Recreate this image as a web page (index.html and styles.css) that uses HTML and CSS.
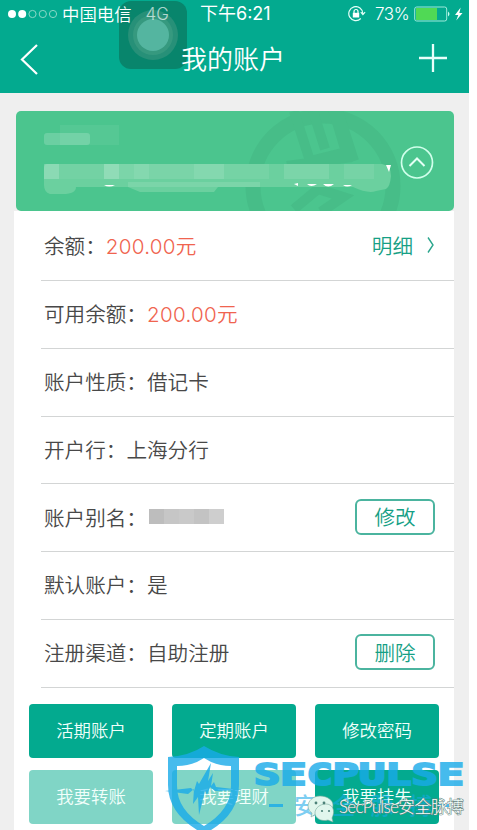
FILE: index.html
```html
<!DOCTYPE html>
<html lang="zh-CN">
<head>
<meta charset="utf-8">
<title>我的账户</title>
<link rel="stylesheet" href="styles.css">
</head>
<body>
<main class="screen">
  <header class="header">
    <div class="assist"><i></i></div>
    <div class="status">
      <div class="carrier">
        <svg width="50" height="12" viewBox="0 0 50 12"><g fill="#fff"><circle cx="4" cy="6" r="4"/><circle cx="14.2" cy="6" r="4"/></g><g fill="none" stroke="#8bd8c7"><circle cx="24.5" cy="6" r="3.6"/><circle cx="34.8" cy="6" r="3.6"/><circle cx="45" cy="6" r="3.6"/></g></svg>
        <span class="operator">中国电信</span><span class="network">4G</span>
      </div>
      <time class="time">下午6:21</time>
      <div class="power">
        <svg class="lock" width="18" height="16" viewBox="0 0 18 16"><path d="M12.8 12.5A7 7 0 1 1 14.8 7.5M12.8 6.2l2.1 2.4 2.2-2.4" fill="none" stroke="#e4fff8" stroke-width="1.2"/><path d="M4.8 6.8h6.4v4.7H4.8z" fill="#fff"/><path d="M6 7V5.5a2 2 0 0 1 4 0V7" fill="none" stroke="#fff" stroke-width="1.2"/></svg>
        <span class="percent">73%</span>
        <svg class="battery" width="50" height="16" viewBox="0 0 50 16"><rect x=".7" y="1" width="32" height="14" rx="2" fill="none" stroke="#a0eadb"/><path d="M2 2h21v12H2z" fill="#50d955"/><path d="M34 5.5q3 2.5 0 5z" fill="#c6fff1"/><path d="M46.7 1.5L41 9h3.3l-2.1 5.6L48.5 7h-3.2z" fill="#fff"/></svg>
      </div>
    </div>
    <div class="titlebar">
      <svg width="20" height="34" viewBox="0 0 20 34"><path d="M18 4L3 18.5 18 33" fill="none" stroke="#fff" stroke-width="2.2"/></svg>
      <h1>我的账户</h1>
      <svg width="30" height="30" viewBox="0 0 30 30"><path d="M1 15h28M15 1v28" stroke="#e9fffa" stroke-width="2.3"/></svg>
    </div>
  </header>

  <section class="card">
    <svg class="card-art" width="438" height="100" viewBox="0 0 438 100">
      <g fill="none" stroke="#47bd88"><circle cx="307" cy="75" r="70" stroke-width="15"/><path d="M278 0l16 50 36-9-13-43M297 0l12 38M271 55l65-9M278 98l24-20 25 8-22 15M322 0l16 50" stroke-width="10"/></g>
      <g fill="#fff"><path opacity=".06" d="M44 14h59v20H44z"/><rect opacity=".18" x="28" y="22" width="46" height="12" rx="3"/></g>
      <path d="M31 53h335q9 1 9 12-1 11-5 13l-10 2q-8 3-23-4H202l-4 5H124l-12-5H60q0 7-13 7H34q-6-2-6-9V57q0-4 3-4z" fill="#6bd09f"/>
      <g fill="#fff"><rect opacity=".22" x="28" y="53" width="15" height="15"/><rect opacity=".06" x="43" y="53" width="45" height="15"/><rect opacity=".25" x="88" y="53" width="15" height="15"/><rect opacity=".11" x="103" y="53" width="15" height="15"/><rect opacity=".17" x="118" y="53" width="15" height="15"/><rect opacity=".1" x="133" y="53" width="45" height="15"/><rect opacity=".17" x="178" y="53" width="30" height="15"/><rect opacity=".07" x="208" y="53" width="45" height="15"/><rect opacity=".11" x="268" y="53" width="45" height="15"/><rect opacity=".08" x="328" y="53" width="30" height="15"/><rect opacity=".11" x="112" y="71" width="132" height="5"/></g>
      <path d="M88 74q5 3 11 0zM278 73l4-1v3zM291 73q4 4 10 0zM307 73q5 5 11 0zM327 74q4 3 9 0zM370 54h5l-2 7z" fill="#fff"/>
      <circle cx="401" cy="51.5" r="15.5" fill="none" stroke="#d0ffeb" stroke-width="1.7"/><path d="M393.5 55l7.5-7.5 7.5 7.5" fill="none" stroke="#e5fff5" stroke-width="2"/>
    </svg>
  </section>

  <section class="panel">
    <div class="rows">
      <div class="row"><span>余额：</span><b>200.00元</b><a class="detail">明细<svg width="9" height="18" viewBox="0 0 9 18"><path d="M2 1.5l5 7.5-5 7.5" fill="none" stroke="#2ba68d" stroke-width="1.4"/></svg></a></div>
      <div class="row"><span>可用余额：</span><b>200.00元</b></div>
      <div class="row"><span>账户性质：</span><span>借记卡</span></div>
      <div class="row"><span>开户行：</span><span>上海分行</span></div>
      <div class="row"><span>账户别名：</span><i class="mask"></i><button class="outline">修改</button></div>
      <div class="row"><span>默认账户：</span><span>是</span></div>
      <div class="row"><span>注册渠道：</span><span>自助注册</span><button class="outline">删除</button></div>
    </div>
    <div class="actions">
      <button>活期账户</button><button>定期账户</button><button>修改密码</button>
      <button class="pale">我要转账</button><button class="pale">我要理财</button><button>我要挂失</button>
    </div>
  </section>

  <svg class="watermark" width="317" height="90" viewBox="160 740 317 90">
    <path d="M177 766q15 0 27-8 12 8 27 8v4h-54z" fill="#fff"/>
    <g fill="#19abe9" opacity=".8">
      <path fill-rule="evenodd" d="M168 757q21-1 36-11 16 10 35 11v28q0 31-35 49-36-19-36-49zM177 766v20q0 24 27 40 27-16 27-40v-20q-15 0-27-8-12 8-27 8z"/>
      <path d="M165 791l26-3 3 3 3-10 2 3 12-21-3 18 5-8-2 13 3-4 2 5 26 3-27 1-5-4-3 8-2-4-6 24-1-18-5 7 1-15-6 5z"/>
      <text class="brand" x="254" y="785" textLength="210" lengthAdjust="spacingAndGlyphs">SECPULSE</text>
      <path d="M269 804h14v3h-14zM438 804h11v3h-11z"/>
      <text class="brand-cn" x="294" y="814" textLength="138">安全脉搏</text>
    </g>
    <g fill="#e0f6ed" stroke="#78aa9c" stroke-width=".6"><path d="M320 796c-7 0-12 5-12 10 0 3 2 6 4 7l-1 4 5-3c12 2 17-3 17-9 0-5-6-9-13-9z"/><path d="M326 804c-6 0-11 4-11 9s6 9 13 7l5 2-1-4c4-8 0-14-6-14z"/></g>
    <g fill="#4d8279"><circle cx="316" cy="803" r="1.4"/><circle cx="324" cy="803" r="1.4"/><circle cx="322" cy="811" r="1.1"/><circle cx="329" cy="811" r="1.1"/></g>
    <text class="credit" x="339" y="813" textLength="125">SecPulse安全脉搏</text>
  </svg>
</main>
</body>
</html>
```

FILE: styles.css
```css
* { box-sizing: border-box; }
body { margin: 0; background: #fff; font-family: "Noto Sans CJK SC", sans-serif; font-weight: 350; }
.screen { position: relative; width: 469px; height: 830px; background: #efefef; display: flex; flex-direction: column; }
.header { position: relative; height: 93px; flex: none; background: #03aa8f; color: #fff; }
.status { position: relative; height: 28px; padding: 0 5px 0 8px; display: grid; grid-template-columns: 192px 1fr auto; align-items: center; font-size: 17.4px; line-height: 28px; }
.carrier, .power { display: flex; align-items: center; }
.operator { margin-left: 4px; }
.network { margin-left: 14px; font-family: Inter, sans-serif; font-size: 17px; opacity: .65; }
.time { font-weight: 400; font-family: Inter, "Noto Sans CJK SC", sans-serif; font-size: 18px; white-space: nowrap; }
.percent { font-family: Inter, sans-serif; font-size: 17px; width: 34px; margin: 0 5px 0 9px; letter-spacing: -.4px; white-space: nowrap; }
.titlebar { position: relative; display: flex; align-items: center; justify-content: space-between; height: 60px; padding: 0 21px 0 19px; }
h1 { margin: 0 0 0 9px; font-size: 26px; line-height: 60px; font-weight: 350; }
.assist { position: absolute; left: 119px; top: 1px; width: 68px; height: 68px; border-radius: 12px; background: rgba(11, 109, 87, .62); display: flex; align-items: center; justify-content: center; }
.assist i { width: 32px; height: 32px; border-radius: 50%; background: #54b5a0; box-shadow: 0 0 0 4px #36997f, 0 0 0 9px #279078; }
.card { margin: 18px 15px 0 16px; height: 100px; flex: none; border-radius: 5px; overflow: hidden; background: #4bc58e; }
.card-art { display: block; }
.panel { flex: 1; margin: 0 15px 0 14px; background: #fff; padding: 2px 0 0; overflow: hidden; }
.rows { margin-left: 27px; }
.row { height: 67.85px; border-bottom: 1px solid #d3d5d5; padding: 0 19px 2.5px 3px; display: flex; align-items: center; font-size: 20.6px; color: #484848; }
.row b { font-family: Inter, "Noto Sans CJK SC", sans-serif; font-weight: 350; letter-spacing: .3px; color: #f0644f; }
.detail { margin-left: auto; margin-right: 0; color: #16a085; display: flex; align-items: center; gap: 13px; }
.mask { width: 75px; height: 15px; margin-left: 2px; background: linear-gradient(90deg, #bdbdbd 0 20%, #c6c6c6 20% 40%, #c9c9c9 40% 60%, #c3c3c3 60% 80%, #cecece 80%); }
.outline { margin-left: auto; width: 80px; height: 36px; padding: 0 0 1px; border: 2px solid #4bb49f; border-radius: 6px; background: none; color: #16a085; font: inherit; line-height: 30px; }
.actions { display: grid; grid-template-columns: repeat(3, 124px); grid-auto-rows: 54px; gap: 12px 19px; padding: 16px 0 0 15px; }
.actions button { border: 0; border-radius: 4px; padding: 0 0 2px; background: #03aa8f; color: #f1fffb; font: inherit; font-size: 17.4px; }
.actions .pale { background: #80d5c6; }
.watermark { position: absolute; left: 160px; top: 740px; }
.brand { font: 700 31px "DejaVu Sans Mono", monospace; stroke: #19abe9; stroke-width: 2px; }
.brand-cn { font: 500 23px "Noto Sans CJK SC", sans-serif; opacity: .7; }
.credit { font: 300 17px Lato, "Noto Sans CJK SC", sans-serif; fill: #f3fffb; stroke: #66807c; stroke-width: 1px; paint-order: stroke; }
```
